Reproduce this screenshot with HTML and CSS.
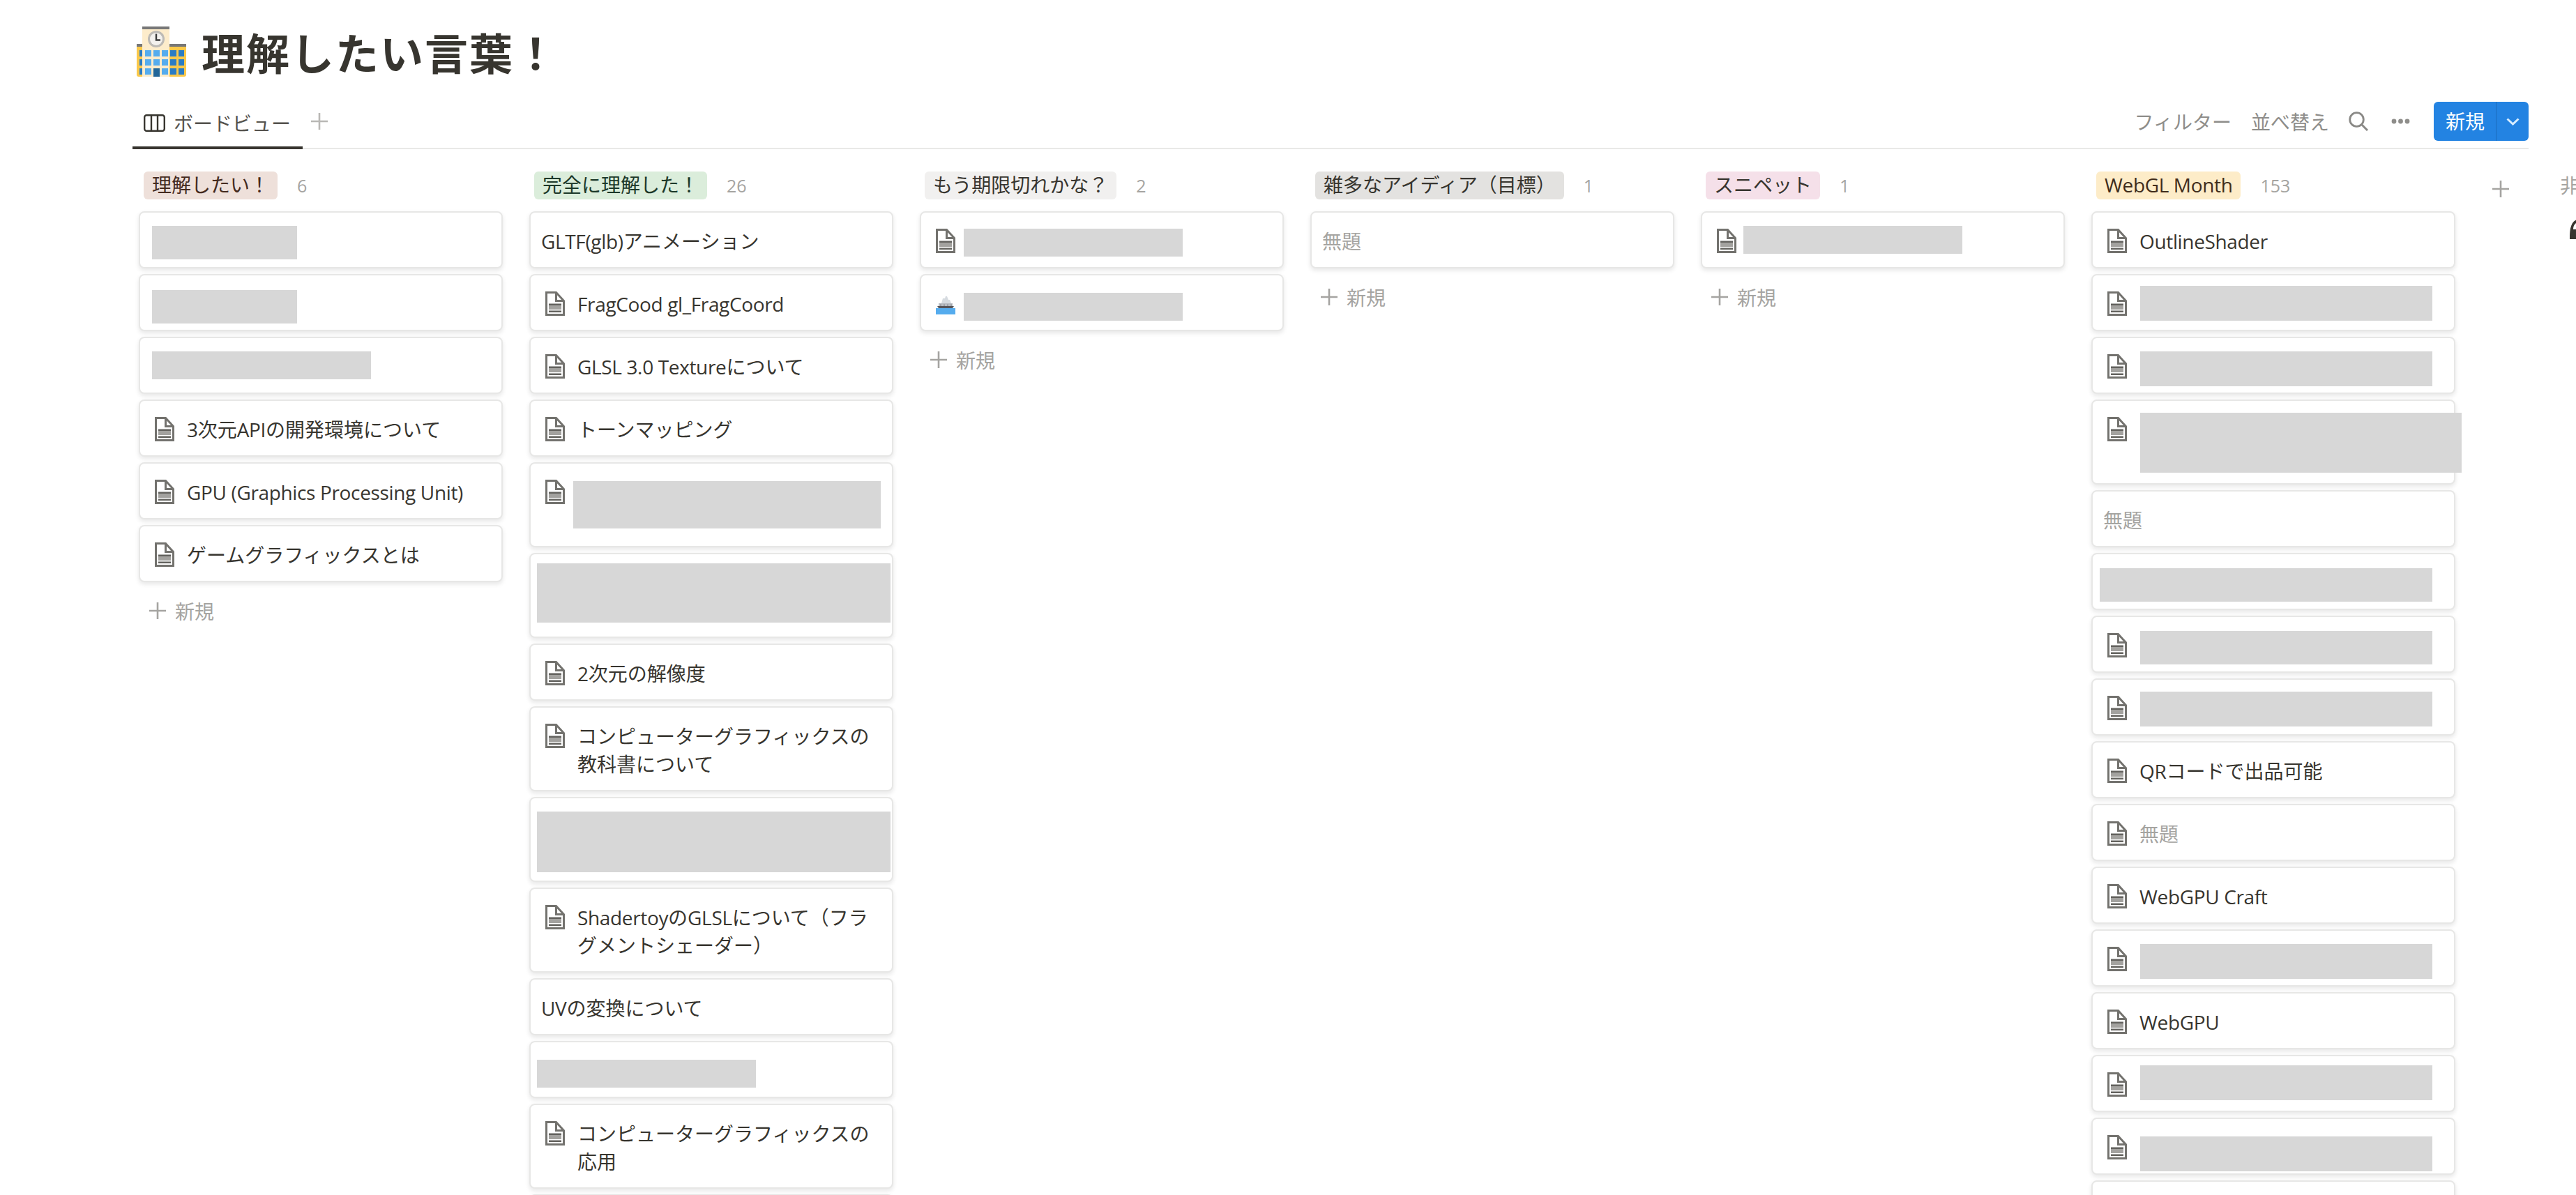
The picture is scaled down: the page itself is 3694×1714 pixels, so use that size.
FILE: index.html
```html
<!DOCTYPE html>
<html lang="ja">
<head>
<meta charset="utf-8">
<title>理解したい言葉！</title>
<link rel="stylesheet" href="styles.css">
</head>
<body>
<svg class="defs" width="0" height="0" aria-hidden="true">
  <symbol id="doc" viewBox="0 0 28 35">
    <path d="M1.5 1.5H15.5L26.5 13.5V33.5H1.5Z" fill="#fff" stroke="#73726e" stroke-width="3"/>
    <path d="M15.5 1.5V13.5H26.5" fill="none" stroke="#73726e" stroke-width="3"/>
    <rect x="5" y="17.5" width="18" height="2.5" fill="#63625e"/>
    <rect x="5" y="20" width="18" height="6" fill="#a3a29f"/>
    <rect x="5" y="27.5" width="18" height="2.5" fill="#63625e"/>
  </symbol>
  <symbol id="plus" viewBox="0 0 24 24">
    <path d="M10.7 0h2.6v10.7H24v2.6H13.3V24h-2.6V13.3H0v-2.6h10.7z"/>
  </symbol>
</svg>
<main class="page">
  <header class="title-row">
    <svg class="school" viewBox="0 0 72 72">
      <rect x="0" y="26" width="71" height="46" rx="3" fill="#fbc94a"/>
      <rect x="0" y="25" width="71" height="4" fill="#777"/>
      <rect x="8" y="0" width="39" height="72" fill="#fdeccb"/>
      <rect x="8" y="0" width="39" height="4" fill="#777"/>
      <circle cx="28" cy="18" r="12" fill="#bdbab5"/>
      <circle cx="28" cy="18" r="9" fill="#f3f1ee"/>
      <path d="M28 10.5V19.5H34" fill="none" stroke="#3a3a3a" stroke-width="2.4"/>
      <g fill="#55acee">
        <rect x="12" y="34" width="9" height="9"/><rect x="24" y="34" width="9" height="9"/><rect x="36" y="34" width="9" height="9"/>
        <rect x="12" y="47" width="9" height="9"/><rect x="24" y="47" width="9" height="9"/><rect x="36" y="47" width="9" height="9"/>
        <rect x="12" y="60" width="9" height="9"/><rect x="36" y="60" width="9" height="9"/>
      </g>
      <rect x="24" y="60" width="9" height="12" fill="#226699"/>
      <g fill="#2a7cc4">
        <rect x="4" y="34" width="4" height="9"/><rect x="4" y="47" width="4" height="9"/><rect x="4" y="60" width="4" height="9"/>
        <rect x="48" y="34" width="9" height="9"/><rect x="60" y="34" width="8" height="9"/>
        <rect x="48" y="47" width="9" height="9"/><rect x="60" y="47" width="8" height="9"/>
        <rect x="48" y="60" width="9" height="9"/><rect x="60" y="60" width="8" height="9"/>
      </g>
    </svg>
    <h1 class="title">理解したい言葉！</h1>
  </header>

  <nav class="toolbar">
    <div class="tabs">
      <div class="tab">
        <svg class="tab-icon" viewBox="0 0 31 25"><rect x="1.2" y="1.2" width="28.6" height="22.6" rx="3" fill="none" stroke="#37352f" stroke-width="2.4"/><path d="M11 1v23M20 1v23" stroke="#37352f" stroke-width="2.4"/></svg>
        <span>ボードビュー</span>
      </div>
      <svg class="tab-add"><use href="#plus"/></svg>
    </div>
    <div class="actions">
      <span class="action">フィルター</span>
      <span class="action">並べ替え</span>
      <svg class="search" viewBox="0 0 28 28"><circle cx="11.5" cy="11.5" r="9.8" fill="none" stroke="#8a8986" stroke-width="2.8"/><path d="M18.5 18.5L27 27" stroke="#8a8986" stroke-width="3"/></svg>
      <svg class="dots" viewBox="0 0 27 8"><circle cx="4" cy="4" r="3.4"/><circle cx="13.5" cy="4" r="3.4"/><circle cx="23" cy="4" r="3.4"/></svg>
      <div class="new-btn">
        <span class="new-label">新規</span>
        <span class="new-menu"><svg class="chevron" viewBox="0 0 19 11"><path d="M1.5 1.5L9.5 9L17.5 1.5" fill="none" stroke="#d7ecff" stroke-width="3"/></svg></span>
      </div>
    </div>
  </nav>

  <section class="board">
    <div class="column">
      <div class="col-head"><span class="tag tag-brown">理解したい！</span><span class="count">6</span></div>
      <div class="cards">
        <div class="card masked"><i class="mask ml1 w208 h48 t21"></i></div>
        <div class="card masked"><i class="mask ml1 w208 h48 t23"></i></div>
        <div class="card masked"><i class="mask ml1 w314 h40 t21"></i></div>
        <div class="card icon-card"><svg class="doc"><use href="#doc"/></svg><span><span class="en">3</span>次元<span class="en">API</span>の開発環境について</span></div>
        <div class="card icon-card"><svg class="doc"><use href="#doc"/></svg><span class="en">GPU (Graphics Processing Unit)</span></div>
        <div class="card icon-card"><svg class="doc"><use href="#doc"/></svg><span>ゲームグラフィックスとは</span></div>
      </div>
      <div class="add-row"><svg class="add-plus"><use href="#plus"/></svg><span>新規</span></div>
    </div>

    <div class="column">
      <div class="col-head"><span class="tag tag-green">完全に理解した！</span><span class="count">26</span></div>
      <div class="cards">
        <div class="card plain"><span><span class="en">GLTF(glb)</span>アニメーション</span></div>
        <div class="card icon-card"><svg class="doc"><use href="#doc"/></svg><span class="en">FragCood gl_FragCoord</span></div>
        <div class="card icon-card"><svg class="doc"><use href="#doc"/></svg><span><span class="en">GLSL 3.0 Texture</span>について</span></div>
        <div class="card icon-card"><svg class="doc"><use href="#doc"/></svg><span>トーンマッピング</span></div>
        <div class="card icon-card masked tall"><svg class="doc"><use href="#doc"/></svg><i class="mask mln6 w441 h68 t27"></i></div>
        <div class="card masked tall wide"><i class="mask w507 h85 t15"></i></div>
        <div class="card icon-card"><svg class="doc"><use href="#doc"/></svg><span><span class="en">2</span>次元の解像度</span></div>
        <div class="card icon-card"><svg class="doc"><use href="#doc"/></svg><span>コンピューターグラフィックスの教科書について</span></div>
        <div class="card masked tall wide"><i class="mask w507 h87 t21"></i></div>
        <div class="card icon-card"><svg class="doc"><use href="#doc"/></svg><span><span class="en">Shadertoy</span>の<span class="en">GLSL</span>について（フラグメントシェーダー）</span></div>
        <div class="card plain"><span><span class="en">UV</span>の変換について</span></div>
        <div class="card masked wide"><i class="mask w314 h40 t27"></i></div>
        <div class="card icon-card"><svg class="doc"><use href="#doc"/></svg><span>コンピューターグラフィックスの応用</span></div>
        <div class="card masked"></div>
      </div>
    </div>

    <div class="column">
      <div class="col-head"><span class="tag tag-gray">もう期限切れかな？</span><span class="count">2</span></div>
      <div class="cards">
        <div class="card icon-card masked"><svg class="doc"><use href="#doc"/></svg><i class="mask mln6 w314 h40 t25"></i></div>
        <div class="card icon-card masked">
          <svg class="ship" viewBox="0 0 28 26">
            <rect x="0" y="17" width="28" height="9" fill="#55acee"/>
            <path d="M2 14H26L24 17H4Z" fill="#55555a"/>
            <path d="M4 10H24V14H4Z" fill="#b8bcc2"/>
            <path d="M8 10L10 3H13L14 0H16L18 5H20L22 10Z" fill="#d6dbe0"/>
            <path d="M6 12h2v1H6zM11 12h2v1h-2zM16 12h2v1h-2zM21 12h2v1h-2z" fill="#55555a"/>
          </svg>
          <i class="mask mln6 w314 h40 t27"></i>
        </div>
      </div>
      <div class="add-row"><svg class="add-plus"><use href="#plus"/></svg><span>新規</span></div>
    </div>

    <div class="column">
      <div class="col-head"><span class="tag tag-mid">雑多なアイディア（目標）</span><span class="count">1</span></div>
      <div class="cards">
        <div class="card plain untitled"><span>無題</span></div>
      </div>
      <div class="add-row"><svg class="add-plus"><use href="#plus"/></svg><span>新規</span></div>
    </div>

    <div class="column">
      <div class="col-head"><span class="tag tag-pink">スニペット</span><span class="count">1</span></div>
      <div class="cards">
        <div class="card icon-card masked"><svg class="doc"><use href="#doc"/></svg><i class="mask mln8 w314 h40 t21"></i></div>
      </div>
      <div class="add-row"><svg class="add-plus"><use href="#plus"/></svg><span>新規</span></div>
    </div>

    <div class="column">
      <div class="col-head"><span class="tag tag-orange"><span class="en">WebGL Month</span></span><span class="count">153</span></div>
      <div class="cards">
        <div class="card icon-card"><svg class="doc"><use href="#doc"/></svg><span class="en">OutlineShader</span></div>
        <div class="card icon-card masked"><svg class="doc"><use href="#doc"/></svg><i class="mask ml1 w419 h50 t17"></i></div>
        <div class="card icon-card masked"><svg class="doc"><use href="#doc"/></svg><i class="mask ml1 w419 h50 t21"></i></div>
        <div class="card icon-card masked tall"><svg class="doc"><use href="#doc"/></svg><i class="mask ml1 w461 h86 t19"></i></div>
        <div class="card plain untitled"><span>無題</span></div>
        <div class="card masked wide"><i class="mask ml1 w477 h48 t22"></i></div>
        <div class="card icon-card masked"><svg class="doc"><use href="#doc"/></svg><i class="mask ml1 w419 h48 t22"></i></div>
        <div class="card icon-card masked"><svg class="doc"><use href="#doc"/></svg><i class="mask ml1 w419 h50 t19"></i></div>
        <div class="card icon-card"><svg class="doc"><use href="#doc"/></svg><span><span class="en">QR</span>コードで出品可能</span></div>
        <div class="card icon-card untitled"><svg class="doc"><use href="#doc"/></svg><span>無題</span></div>
        <div class="card icon-card"><svg class="doc"><use href="#doc"/></svg><span class="en">WebGPU Craft</span></div>
        <div class="card icon-card masked"><svg class="doc"><use href="#doc"/></svg><i class="mask ml1 w419 h50 t21"></i></div>
        <div class="card icon-card"><svg class="doc"><use href="#doc"/></svg><span class="en">WebGPU</span></div>
        <div class="card icon-card masked"><svg class="doc"><use href="#doc"/></svg><i class="mask ml1 w419 h50 t15"></i></div>
        <div class="card icon-card masked"><svg class="doc"><use href="#doc"/></svg><i class="mask ml1 w419 h50 t27"></i></div>
        <div class="card masked"></div>
      </div>
    </div>

    <div class="add-group"><svg class="group-plus"><use href="#plus"/></svg></div>

    <div class="hidden-group">
      <div class="hidden-label">非表示</div>
      <svg class="lock" viewBox="0 0 30 30"><path d="M0 28C0 18 0 4 10 0L12 3C6 6 5 10 5 14H30V28Z" fill="#37352f"/></svg>
    </div>
  </section>
</main>
</body>
</html>
```
FILE: styles.css
```css
* { box-sizing: border-box; }

html, body {
  margin: 0;
  height: 1714px;
  overflow: hidden;
  background: #fff;
}

body {
  font-family: "Open Sans", "Noto Sans CJK JP", sans-serif;
  font-size: 28px;
  color: #37352f;
}

.defs { position: absolute; }

.page {
  height: 1714px;
  padding-top: 38px;
  overflow: hidden;
}

.en {
  font-weight: 500;
  letter-spacing: -.35px;
}

/* Title */
.title-row {
  display: flex;
  align-items: center;
  height: 72px;
  padding-left: 196px;
  gap: 21px;
}
.school { width: 72px; height: 72px; flex-shrink: 0; }
.title {
  margin: 0;
  font-size: 62px;
  letter-spacing: 2px;
  line-height: 72px;
  font-weight: 700;
  font-family: "Noto Sans CJK JP", sans-serif;
}

/* Toolbar */
.toolbar {
  display: flex;
  justify-content: space-between;
  height: 76px;
  margin: 28px 68px 0 190px;
  border-bottom: 2px solid #e9e9e7;
}
.tabs { display: flex; align-items: flex-start; }
.tab {
  display: flex;
  align-items: center;
  gap: 12px;
  width: 244px;
  height: 76px;
  padding: 8px 0 4px 16px;
  border-bottom: 4px solid #37352f;
  color: #55534e;
}
.tab-icon { width: 31px; height: 25px; }
.tab-add {
  width: 24px;
  height: 24px;
  margin: 24px 0 0 12px;
  fill: #b9b8b5;
}
.actions {
  display: flex;
  align-items: center;
  gap: 28px;
  height: 56px;
  margin-top: 8px;
}
.action { color: #8e8d8a; }
.search { width: 28px; height: 28px; }
.dots { width: 27px; height: 8px; margin-left: 5px; fill: #8e8d8a; }
.new-btn {
  display: flex;
  width: 136px;
  height: 56px;
  margin-left: 6px;
  border-radius: 6px;
  background: #2383e2;
  color: #fff;
  line-height: 56px;
}
.new-label {
  width: 90px;
  padding-left: 17px;
  border-right: 1px solid #1a6cbd;
}
.new-menu {
  display: flex;
  flex: 1;
  align-items: center;
  justify-content: center;
}
.chevron { width: 19px; height: 11px; }

/* Board */
.board {
  display: flex;
  gap: 38px;
  padding: 32px 0 0 199px;
}
.column {
  flex: 0 0 522px;
  width: 522px;
}
.col-head {
  display: flex;
  align-items: center;
  gap: 28px;
  height: 40px;
  margin-bottom: 17px;
  padding-left: 7px;
}
.tag {
  height: 40px;
  padding: 0 12px;
  border-radius: 6px;
  line-height: 38px;
  white-space: nowrap;
}
.tag-brown { background: #eee0da; color: #442a1e; }
.tag-green { background: #dbeddb; color: #1c3829; }
.tag-gray { background: #f1f0ef; }
.tag-mid { background: #e3e2e0; }
.tag-pink { background: #f5e0e9; }
.tag-orange { background: #fdecc8; color: #402c1b; }
.count {
  font-size: 25px;
  color: #a5a4a1;
}

/* Cards */
.cards {
  display: flex;
  flex-direction: column;
  gap: 8px;
}
.card {
  display: flex;
  flex: none;
  align-items: flex-start;
  gap: 18px;
  min-height: 82px;
  padding: 21px 20px 17px 21px;
  border: 2px solid #e7e7e6;
  border-radius: 8px;
  background: #fff;
  box-shadow: 0 3px 6px rgba(15, 15, 15, .1);
  line-height: 40px;
  color: #37352f;
}
.card.plain { padding-left: 15px; }
.card.masked { padding-top: 0; padding-bottom: 0; padding-left: 16px; }
.card.icon-card.masked { padding-left: 21px; }
.card.icon-card.masked .doc { margin-top: 23px; }
.card.masked.wide { padding-left: 9px; }
.card.tall { min-height: 122px; }
.card.untitled { color: #a5a4a1; }
.doc {
  flex: none;
  width: 28px;
  height: 35px;
  margin-top: 2px;
}
.ship {
  flex: none;
  width: 28px;
  height: 26px;
}
.card.icon-card.masked .ship { margin-top: 30px; }

.mask { display: block; flex: none; background: #d7d7d7; }
.ml1 { margin-left: 1px; }
.mln6 { margin-left: -6px; }
.mln8 { margin-left: -8px; }
.w208 { width: 208px; }
.w314 { width: 314px; }
.w419 { width: 419px; }
.w441 { width: 441px; }
.w461 { width: 461px; }
.w477 { width: 477px; }
.w507 { width: 507px; }
.h40 { height: 40px; }
.h48 { height: 48px; }
.h50 { height: 50px; }
.h68 { height: 68px; }
.h85 { height: 85px; }
.h86 { height: 86px; }
.h87 { height: 87px; }
.t15 { margin-top: 13px; }
.t17 { margin-top: 15px; }
.t19 { margin-top: 17px; }
.t21 { margin-top: 19px; }
.t22 { margin-top: 20px; }
.t23 { margin-top: 21px; }
.t25 { margin-top: 23px; }
.t27 { margin-top: 25px; }

.add-row {
  display: flex;
  align-items: center;
  gap: 13px;
  height: 40px;
  margin-top: 21px;
  padding-left: 15px;
  color: #a5a4a1;
}
.add-plus { width: 24px; height: 24px; fill: #a5a4a1; }

/* Right-hand group controls */
.add-group {
  flex: 0 0 54px;
  padding: 7px 0 0 15px;
}
.group-plus { width: 24px; height: 24px; fill: #a5a4a1; }
.hidden-group {
  flex: 0 0 200px;
  margin-left: 20px;
}
.hidden-label {
  height: 40px;
  line-height: 40px;
  color: #a5a4a1;
  white-space: nowrap;
}
.lock {
  display: block;
  width: 30px;
  height: 30px;
  margin: 29px 0 0 14px;
}
```
